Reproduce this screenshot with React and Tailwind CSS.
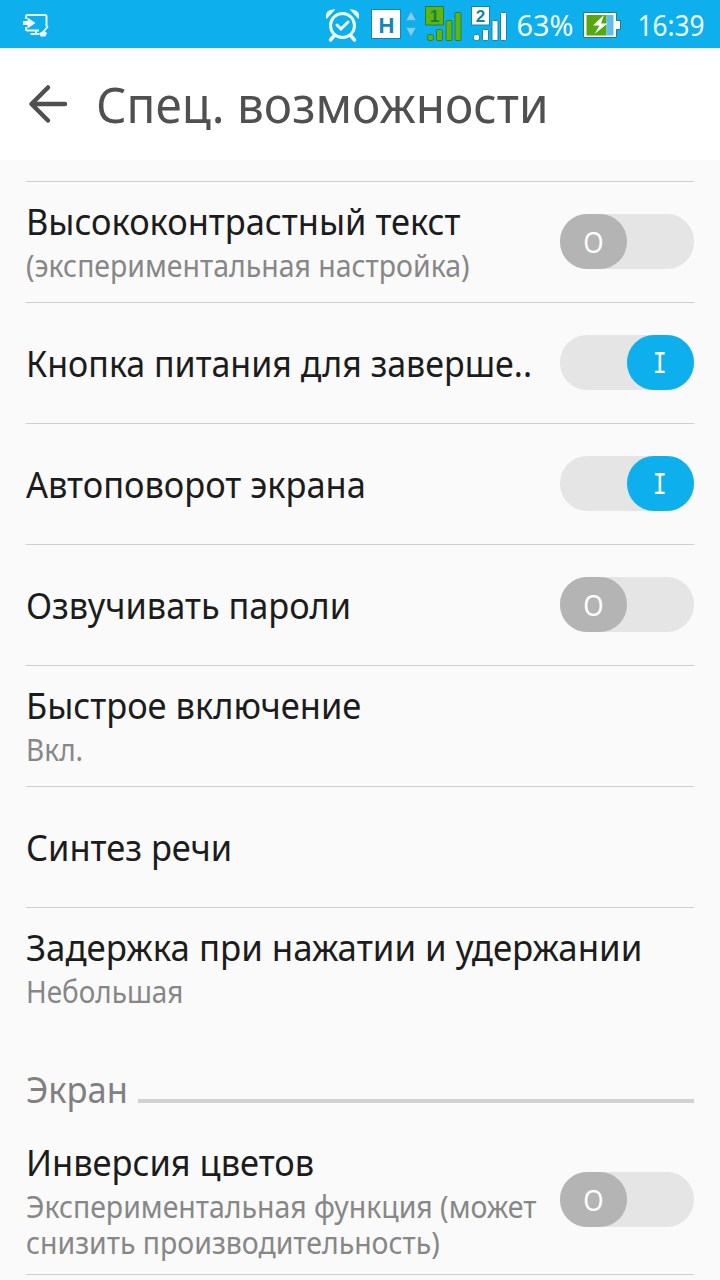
import React from "react";

function Toggle({ on }) {
  return (
    <div className={`flex h-[55px] w-[134px] shrink-0 rounded-[27px] bg-[#e5e5e5] ${on ? "justify-end" : "justify-start"}`}>
      <div className={`flex h-[55px] w-[67px] items-center justify-center rounded-[27px] text-white ${on ? "bg-[#0eafed]" : "bg-[#b4b4b4]"}`}>
        {on ? (
          <span className="mr-0.5 mt-0.5 scale-x-[.8] font-['DejaVu_Sans_Mono',monospace] text-[29px] leading-none">I</span>
        ) : (
          <span className="-mt-px scale-x-[.9] font-['Noto_Sans',sans-serif] text-[29px] leading-none">O</span>
        )}
      </div>
    </div>
  );
}

function Row({ title, sub, toggle, last, tall, fit = "scale-x-[.943]", subFit = "scale-x-[.948]" }) {
  return (
    <div className={`flex w-full justify-between ${tall ? "h-[152px]" : "h-[121px]"} ${last ? "" : "border-b border-[#cfcfcf]"}`}>
      <div className={`flex min-w-0 flex-1 flex-col items-start whitespace-pre ${sub ? "pt-[17px]" : "pt-[38px]"}`}>
        <div className={`origin-left text-[36.5px] leading-[44px] text-[#1c1c1c] ${fit}`}>{title}</div>
        {sub && <div className={`mt-[5px] origin-left text-[30px] leading-[36px] text-[#878787] ${subFit}`}>{sub}</div>}
      </div>
      {toggle && (
        <div className={tall ? "pt-[49px]" : "pt-8"}>
          <Toggle on={toggle === "on"} />
        </div>
      )}
    </div>
  );
}

function StatusBar() {
  return (
    <div className="flex h-12 w-full items-center bg-[#0eafed] text-white">
      <svg width="720" height="48" viewBox="0 0 720 48" fill="none">
        <g stroke="#e9fbff" strokeWidth="2">
          <path d="M26 19v-2.500q0-1.500 1.500-1.500h17.500q1.500 0 1.500 1.500v10M26 27v2q0 1.500 1.500 1.500H39M36 31v3M30.500 34h9" />
          <path d="M23 21h4.500v-3.500l8 5.500-8 5.500v-3.500h-4.500z" fill="#e9fbff" stroke="none" />
          <path d="M43 32l5-5.500" strokeWidth="1.800" />
          <path d="M39.500 33l4.500-2.500 3 2.500-1.500 3.500h-5z" fill="#e9fbff" stroke="none" />
        </g>
        <g stroke="#effcff" strokeLinecap="round">
          <circle cx="342.500" cy="25.500" r="12" strokeWidth="3" />
          <path d="M337 25l4 4 7-7" strokeWidth="3" />
          <path d="M334 36l-3.500 4M351 36l3.500 4" strokeWidth="3.500" />
          <path d="M327 17q-1-6 6-6.500zM358 17q1-6-6-6.500z" fill="#effcff" strokeWidth="2" />
        </g>
        <rect x="371.500" y="9.500" width="29" height="29" fill="#fff" stroke="#1387b2" />
        <text x="386.500" y="32.500" textAnchor="middle" fontFamily="Liberation Sans, sans-serif" fontWeight="700" fontSize="22" fill="#1686b8">H</text>
        <path d="M411 11l5 9.500h-10zM411 37l5-9.500h-10z" fill="#7fcff0" stroke="#35a5d2" strokeWidth=".8" />
        <g fill="#5fb612" stroke="#26803c">
          <rect x="425.500" y="6.500" width="18" height="18.500" />
          <rect x="427.500" y="34.500" width="6" height="6" rx="2" />
          <rect x="436.500" y="29.500" width="6" height="11" rx="1" />
          <rect x="446" y="20.500" width="6" height="20" rx="1" />
          <rect x="455" y="12.500" width="6" height="28" rx="1" />
        </g>
        <text x="434.500" y="22" textAnchor="middle" fontFamily="Liberation Sans, sans-serif" fontWeight="700" fontSize="17" fill="#16803c">1</text>
        <g fill="#fff" stroke="#1387b2">
          <rect x="471.500" y="6.500" width="18" height="18.500" />
          <rect x="473.500" y="34.500" width="6" height="6" rx="2" />
          <rect x="482.500" y="29.500" width="6" height="11" rx="1" />
          <rect x="492" y="20.500" width="6" height="20" rx="1" />
          <rect x="500.500" y="12.500" width="6" height="28" rx="1" />
        </g>
        <text x="480.500" y="22" textAnchor="middle" fontFamily="Liberation Sans, sans-serif" fontWeight="700" fontSize="17" fill="#1680ad">2</text>
        <g fontFamily="Noto Sans, sans-serif" fontSize="28.500" fill="#f0fcff">
          <text x="516.500" y="36" textLength="57" lengthAdjust="spacingAndGlyphs">63%</text>
          <text x="637.500" y="36" textLength="67" lengthAdjust="spacingAndGlyphs">16:39</text>
        </g>
        <path d="M583.500 12.500h33v8h4v9h-4v8h-33z" fill="#fff" stroke="#237f70" />
        <rect x="586.500" y="15" width="20" height="20.500" fill="#55a80e" />
        <rect x="606.500" y="15" width="7" height="20.500" fill="#62bdea" />
        <path d="M604 15l-11 10.500h6.500l-5 8.500 13-10.500h-6.500z" fill="#fff" />
      </svg>
    </div>
  );
}

export default function App() {
  return (
    <div className="flex h-[1280px] w-[720px] flex-col overflow-hidden bg-[#fafafa] font-['Noto_Sans',sans-serif]">
      <StatusBar />
      <header className="flex h-28 shrink-0 items-center bg-white pl-7">
        <svg width="40" height="40" viewBox="0 0 40 40" fill="none" stroke="#505050" strokeWidth="4.500" strokeLinecap="round" strokeLinejoin="round">
          <path d="M20 3.500L3.500 20 20 36.500M4 20h33" />
        </svg>
        <h1 className="ml-7 origin-left scale-x-[.973] whitespace-pre text-[49px] leading-[60px] text-[#505050]">Спец. возможности</h1>
      </header>
      <main className="mt-[21px] flex flex-col px-[26px]">
        <div className="border-t border-[#cfcfcf]">
          <Row title="Высококонтрастный текст" sub="(экспериментальная настройка)" toggle="off" />
          <Row title="Кнопка питания для заверше.." toggle="on" fit="scale-x-[.931]" />
          <Row title="Автоповорот экрана" toggle="on" />
          <Row title="Озвучивать пароли" toggle="off" fit="scale-x-[.94]" />
          <Row title="Быстрое включение" sub="Вкл." subFit="scale-x-[.935]" />
          <Row title="Синтез речи" />
          <Row title="Задержка при нажатии и удержании" sub="Небольшая" fit="scale-x-[.954]" subFit="scale-x-[.93]" last />
        </div>
        <div className="flex h-[94px] items-start justify-between pt-[37px]">
          <h2 className="mt-px origin-left scale-x-[.944] text-[36.5px] leading-[44px] text-[#808080]">Экран</h2>
          <div className="mt-[33px] h-1 w-[556px] shrink-0 bg-[#d2d2d2]" />
        </div>
        <Row title="Инверсия цветов" sub={"Экспериментальная функция (может\nснизить производительность)"} toggle="off" tall />
      </main>
    </div>
  );
}
